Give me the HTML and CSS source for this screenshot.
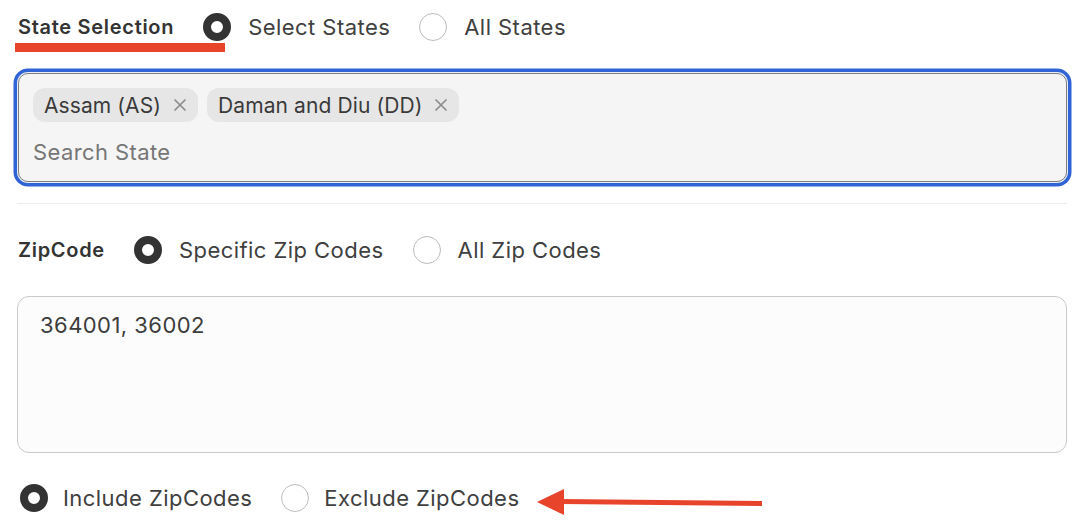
FILE: index.html
```html
<!DOCTYPE html>
<html lang="en">
<head>
<meta charset="utf-8">
<title>Location Filters</title>
<link rel="stylesheet" href="styles.css">
</head>
<body>
<div class="page">
  <div class="row row-state">
    <span class="label">State Selection</span>
    <label class="option"><span class="radio checked"></span><span class="opt-text">Select States</span></label>
    <label class="option"><span class="radio"></span><span class="opt-text">All States</span></label>
  </div>

  <div class="multiselect">
    <div class="chips">
      <span class="chip"><span class="chip-text">Assam (AS)</span><svg class="chip-x" width="12" height="12" viewBox="0 0 12 12"><path d="M1 1L11 11M11 1L1 11" stroke="#8c8c8c" stroke-width="1.7" stroke-linecap="round"/></svg></span>
      <span class="chip"><span class="chip-text">Daman and Diu (DD)</span><svg class="chip-x" width="12" height="12" viewBox="0 0 12 12"><path d="M1 1L11 11M11 1L1 11" stroke="#8c8c8c" stroke-width="1.7" stroke-linecap="round"/></svg></span>
    </div>
    <input class="search" type="text" placeholder="Search State">
  </div>

  <hr class="divider">

  <div class="row row-zip">
    <span class="label">ZipCode</span>
    <label class="option"><span class="radio checked"></span><span class="opt-text">Specific Zip Codes</span></label>
    <label class="option"><span class="radio"></span><span class="opt-text">All Zip Codes</span></label>
  </div>

  <textarea class="zip-area">364001, 36002</textarea>

  <div class="row row-mode">
    <label class="option"><span class="radio checked"></span><span class="opt-text">Include ZipCodes</span></label>
    <label class="option"><span class="radio"></span><span class="opt-text">Exclude ZipCodes</span></label>
  </div>

  <div class="underline-mark"></div>
  <svg class="arrow-mark" width="1090" height="526" viewBox="0 0 1090 526">
    <line x1="762" y1="503.5" x2="560" y2="501.5" stroke="#e8432b" stroke-width="5"/>
    <polygon points="537,502 564,489 564,515" fill="#e8432b"/>
  </svg>
</div>
</body>
</html>
```

FILE: styles.css
```css
* { box-sizing: border-box; }
html, body { margin: 0; padding: 0; background: #ffffff; }
body {
  font-family: Inter, "Noto Sans", "Liberation Sans", sans-serif;
  color: #3d3d3d;
  width: 1090px;
  height: 526px;
  overflow: hidden;
}
.page {
  position: relative;
  padding: 0 23px 0 18px;
  height: 526px;
}
.row {
  display: flex;
  align-items: center;
}
.row-state { height: 54px; }
.label {
  font-size: 20px;
  font-weight: 600;
  color: #333;
  letter-spacing: 0.7px;
  margin-right: 29px;
}
.option {
  display: flex;
  align-items: center;
  margin-right: 29px;
}
.radio {
  width: 28px;
  height: 28px;
  border-radius: 50%;
  border: 1.5px solid #bcbcbc;
  background: #fff;
  margin-right: 17px;
  flex: none;
}
.radio.checked {
  border: 8px solid #333;
}
.opt-text {
  font-size: 22px;
  letter-spacing: 0.45px;
  color: #404040;
}
.multiselect {
  margin-top: 19px;
  border: 1.5px solid #7c7c7c;
  border-radius: 10px;
  background: #f5f5f5;
  box-shadow: 0 0 0 1px #e9eefa, 0 0 0 4.5px #2f63d6;
  padding: 14px 14px 13px 14px;
  height: 109px;
}
.chips {
  display: flex;
  gap: 9px;
  height: 34px;
}
.chip {
  display: flex;
  align-items: center;
  background: #e6e6e6;
  border-radius: 12px;
  padding: 0 12px 0 11px;
  height: 34px;
}
.chip-text {
  font-size: 21px;
  letter-spacing: 0.1px;
  color: #3a3a3a;
}
.chip-x {
  margin-left: 13px;
  flex: none;
}
.search {
  display: block;
  margin-top: 14px;
  width: 100%;
  height: 32px;
  border: none;
  background: transparent;
  padding: 0;
  font-family: inherit;
  font-size: 22px;
  letter-spacing: 0.4px;
  color: #333;
  outline: none;
}
.search::placeholder { color: #767676; }
.divider {
  border: none;
  border-top: 1.5px solid #ececec;
  margin: 21px 0 0 -1px;
  height: 0;
}
.row-zip {
  height: 46px;
  margin-top: 23px;
}
.zip-area {
  display: block;
  margin: 23px 0 0 -1px;
  width: 1050px;
  height: 157px;
  border: 1.5px solid #c9c9c9;
  border-radius: 12px;
  background: #fcfcfc;
  padding: 14px 22px;
  font-family: inherit;
  font-size: 22px;
  letter-spacing: 0.45px;
  line-height: 28px;
  color: #3d3d3d;
  resize: none;
  outline: none;
}
.row-mode {
  height: 46px;
  margin-top: 22px;
  padding-left: 2px;
}
.row-mode .radio { margin-right: 15px; }
.underline-mark {
  position: absolute;
  left: 15px;
  top: 43px;
  width: 210px;
  height: 9px;
  background: #e8432b;
}
.arrow-mark {
  position: absolute;
  left: 0;
  top: 0;
  pointer-events: none;
}
```
